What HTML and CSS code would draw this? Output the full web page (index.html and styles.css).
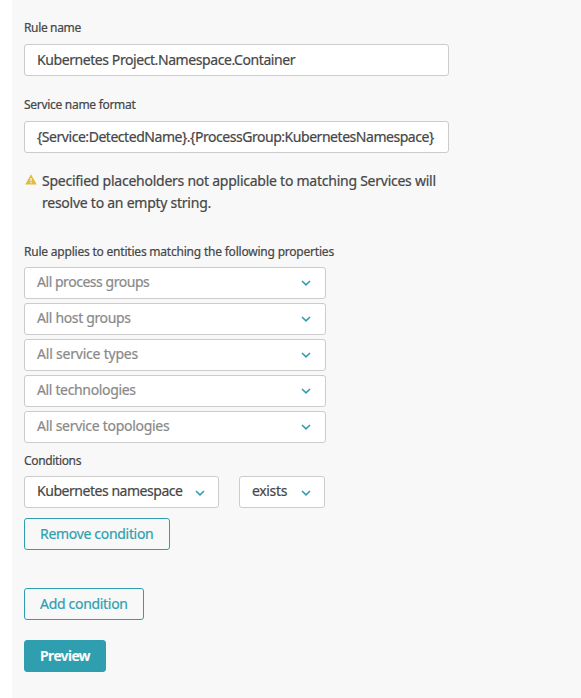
FILE: index.html
```html
<!DOCTYPE html>
<html lang="en">
<head>
<meta charset="utf-8">
<title>Service naming rule</title>
<link rel="stylesheet" href="styles.css">
</head>
<body>
<main class="panel">
  <div class="field">
    <div class="label tight-3">Rule name</div>
    <div class="input tight-4">Kubernetes Project.Namespace.Container</div>
  </div>
  <div class="field format">
    <div class="label tight-2">Service name format</div>
    <div class="input tight-5">{Service:DetectedName}.{ProcessGroup:KubernetesNamespace}</div>
  </div>
  <div class="hint">
    <svg class="warn" viewBox="0 0 12 11"><path d="M6 .3 11.7 10.5H.3Z" fill="#e0bb3c"/><path d="M5.4 4h1.2v3.2H5.4zM5.4 8h1.2v1.2H5.4z" fill="#f8f8f8"/></svg>
    <p>Specified placeholders not applicable to matching Services will<br>resolve to an empty string.</p>
  </div>
  <div class="label short tight-1">Rule applies to entities matching the following properties</div>
  <div class="selects">
    <div class="select muted tight-5"><span>All process groups</span><svg class="chev" viewBox="0 0 10 6"><path d="M1 1l4 3.8L9 1"/></svg></div>
    <div class="select muted tight-3"><span>All host groups</span><svg class="chev" viewBox="0 0 10 6"><path d="M1 1l4 3.8L9 1"/></svg></div>
    <div class="select muted tight-1"><span>All service types</span><svg class="chev" viewBox="0 0 10 6"><path d="M1 1l4 3.8L9 1"/></svg></div>
    <div class="select muted tight-3"><span>All technologies</span><svg class="chev" viewBox="0 0 10 6"><path d="M1 1l4 3.8L9 1"/></svg></div>
    <div class="select muted tight-2"><span>All service topologies</span><svg class="chev" viewBox="0 0 10 6"><path d="M1 1l4 3.8L9 1"/></svg></div>
  </div>
  <div class="label short tight-3">Conditions</div>
  <div class="row">
    <div class="select attr tight-5"><span>Kubernetes namespace</span><svg class="chev" viewBox="0 0 10 6"><path d="M1 1l4 3.8L9 1"/></svg></div>
    <div class="select op tight-3"><span>exists</span><svg class="chev" viewBox="0 0 10 6"><path d="M1 1l4 3.8L9 1"/></svg></div>
  </div>
  <button class="btn remove">Remove condition</button>
  <button class="btn add">Add condition</button>
  <button class="btn primary">Preview</button>
</main>
</body>
</html>
```
FILE: styles.css
```css
* { box-sizing: border-box; }
body { margin: 0; background: #fff; color: #454646; font: 14px/22px "Noto Sans", "Open Sans", sans-serif; -webkit-text-stroke: .2px; }
.panel { margin-left: 12px; padding: 20px 12px 0; min-height: 698px; background: #f8f8f8; display: flex; flex-direction: column; align-items: flex-start; }
.label { height: 24px; font-size: 12px; line-height: 16px; white-space: nowrap; }
.short { height: 23px; }
.format { margin-top: 21px; }
.input, .select { height: 32px; border: 1px solid #ccc; border-radius: 3px; background: #fff; padding: 0 12px; line-height: 30px; white-space: nowrap; }
.input { width: 425px; }
.hint { display: flex; gap: 5px; margin: 17px 0 30px; padding-left: 1px; white-space: nowrap; letter-spacing: -.25px; }
.hint p { margin: 0; }
.warn { width: 12px; height: 11px; margin-top: 4px; }
.selects { display: grid; gap: 4px; margin-bottom: 10px; }
.select { width: 302px; display: flex; align-items: center; justify-content: space-between; padding-right: 14px; }
.select span { padding-bottom: 2px; line-height: 28px; }
.muted { color: #898989; }
.chev { width: 10px; height: 6px; fill: none; stroke: #2f9fb0; stroke-width: 1.6; }
.selects .chev { margin-bottom: 1px; }
.row { display: flex; gap: 20px; }
.row .chev { margin-top: 2px; }
.attr { width: 195px; padding-right: 13px; }
.op { width: 86px; padding-right: 13px; }
.tight-1 { letter-spacing: -.21px; }
.tight-2 { letter-spacing: -.29px; }
.tight-3 { letter-spacing: -.35px; }
.tight-4 { letter-spacing: -.42px; }
.tight-5 { letter-spacing: -.46px; }
.btn { height: 32px; border: 1px solid #2f9fb0; border-radius: 3px; background: #f8f8f8; color: #2f9fb0; font: inherit; letter-spacing: -.31px; padding: 0 15px; text-align: left; white-space: nowrap; }
.remove { width: 146px; margin-top: 10px; }
.add { width: 120px; margin-top: 38px; }
.primary { width: 82px; margin-top: 20px; background: #2f9fb0; color: #fff; font-weight: 600; letter-spacing: -.5px; }
```
